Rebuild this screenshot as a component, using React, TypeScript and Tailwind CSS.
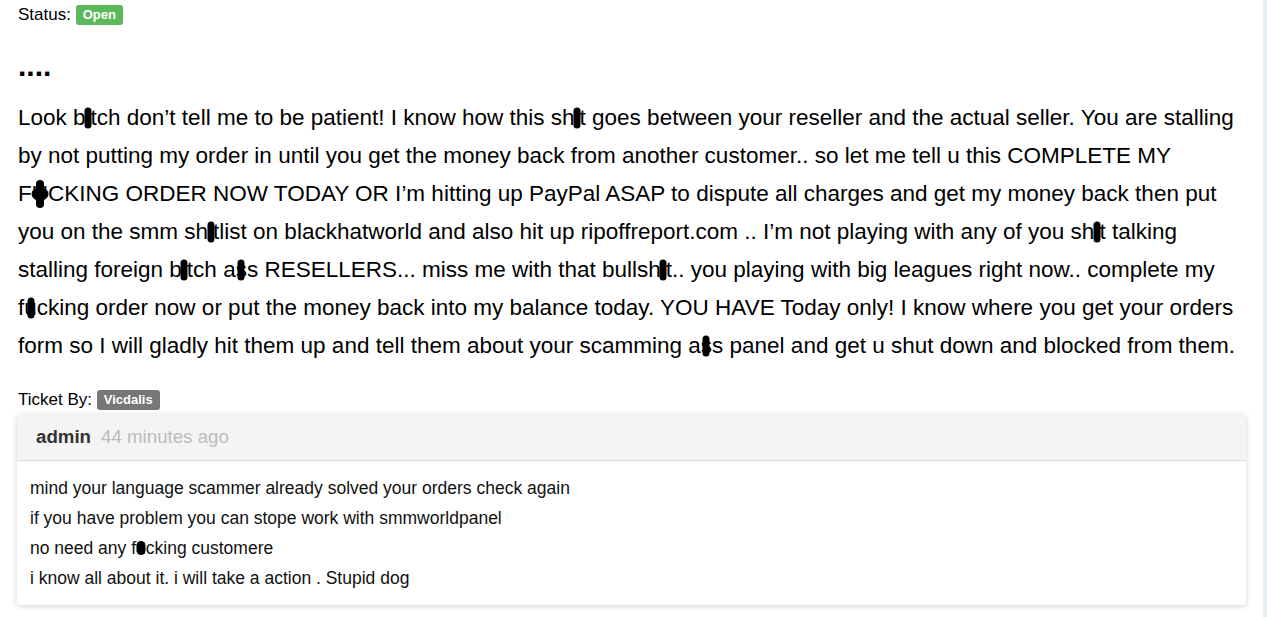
import type { ReactNode } from "react";

// Black censor mark drawn over a single letter.
function Blot({ ch, big = false }: { ch: string; big?: boolean }) {
  return (
    <span className="relative">
      {ch}
      {big ? (
        <>
          <span className="absolute left-1/2 top-1/2 h-[28px] w-[8px] -translate-x-1/2 -translate-y-1/2 rounded-full bg-black" />
          <span className="absolute left-1/2 top-1/2 h-[11px] w-[17px] -translate-x-1/2 -translate-y-1/2 rounded-full bg-black" />
        </>
      ) : (
        <span className="absolute left-1/2 top-1/2 h-[21px] w-[7px] -translate-x-1/2 -translate-y-1/2 rounded-full bg-black" />
      )}
    </span>
  );
}

function SmallBlot({ ch }: { ch: string }) {
  return (
    <span className="relative">
      {ch}
      <span className="absolute left-1/2 top-1/2 h-[14px] w-[9px] -translate-x-1/2 -translate-y-1/2 rounded-full bg-black" />
    </span>
  );
}

function Badge({ children, color }: { children: ReactNode; color: string }) {
  return (
    <span
      className={`inline-block rounded-[3px] px-[7px] py-[2px] align-[1px] text-[13px] font-bold leading-[16px] text-white ${color}`}
    >
      {children}
    </span>
  );
}

export default function App() {
  return (
    <div
      className="flex min-h-[617px] bg-white text-black"
      style={{ fontFamily: '"Liberation Sans", Arial, sans-serif' }}
    >
      <div className="w-[1263px] pl-[18px] pr-[21px]">
        <div className="pt-[4px] text-[17px] leading-[22px]">
          Status: <Badge color="bg-[#5cb85c]">Open</Badge>
        </div>

        <h3 className="mt-[25px] text-[30px] font-bold leading-[30px]">....</h3>

        <p className="mt-[18px] text-[22.5px] leading-[38px]">
          Look b<Blot ch="i" />tch don’t tell me to be patient! I know how this sh<Blot ch="i" />t
          goes between your reseller and the actual seller. You are stalling by not putting my
          order in until you get the money back from another customer.. so let me tell u this
          COMPLETE MY F<Blot ch="U" big />CKING ORDER NOW TODAY OR I’m hitting up PayPal ASAP to
          dispute all charges and get my money back then put you on the smm sh<Blot ch="i" />tlist
          on blackhatworld and also hit up ripoffreport.com .. I’m not playing with any of you sh
          <Blot ch="i" />t talking stalling foreign b<Blot ch="i" />tch a<Blot ch="s" />s
          RESELLERS... miss me with that bullsh<Blot ch="i" />t.. you playing with big leagues
          right now.. complete my f<Blot ch="u" />cking order now or put the money back into my
          balance today. YOU HAVE Today only! I know where you get your orders form so I will
          gladly hit them up and tell them about your scamming a<Blot ch="s" />s panel and get u
          shut down and blocked from them.
        </p>

        <div className="mt-[24px] text-[17px] leading-[22px]">
          Ticket By: <Badge color="bg-[#777777]">Vicdalis</Badge>
        </div>

        <div className="-ml-[1px] mt-[4px] w-[1229px] rounded-[3px] bg-white shadow-[0_1px_6px_rgba(0,0,0,0.18)]">
          <div className="flex h-[46px] items-center gap-[10px] border-b border-[#dddddd] bg-[#f4f4f4] px-[19px] text-[18.7px]">
            <span className="font-bold text-[#333333]">admin</span>
            <span className="text-[#bbbbbb]">44 minutes ago</span>
          </div>
          <div className="px-[13px] pb-[12px] pt-[12px] text-[17.5px] leading-[30px] text-[#111111]">
            <div>mind your language scammer already solved your orders check again</div>
            <div>if you have problem you can stope work with smmworldpanel</div>
            <div>
              no need any f<SmallBlot ch="u" />cking customere
            </div>
            <div>i know all about it. i will take a action . Stupid dog</div>
          </div>
        </div>
      </div>
      <div className="w-[4px] bg-[#e6f0f3]" />
    </div>
  );
}
